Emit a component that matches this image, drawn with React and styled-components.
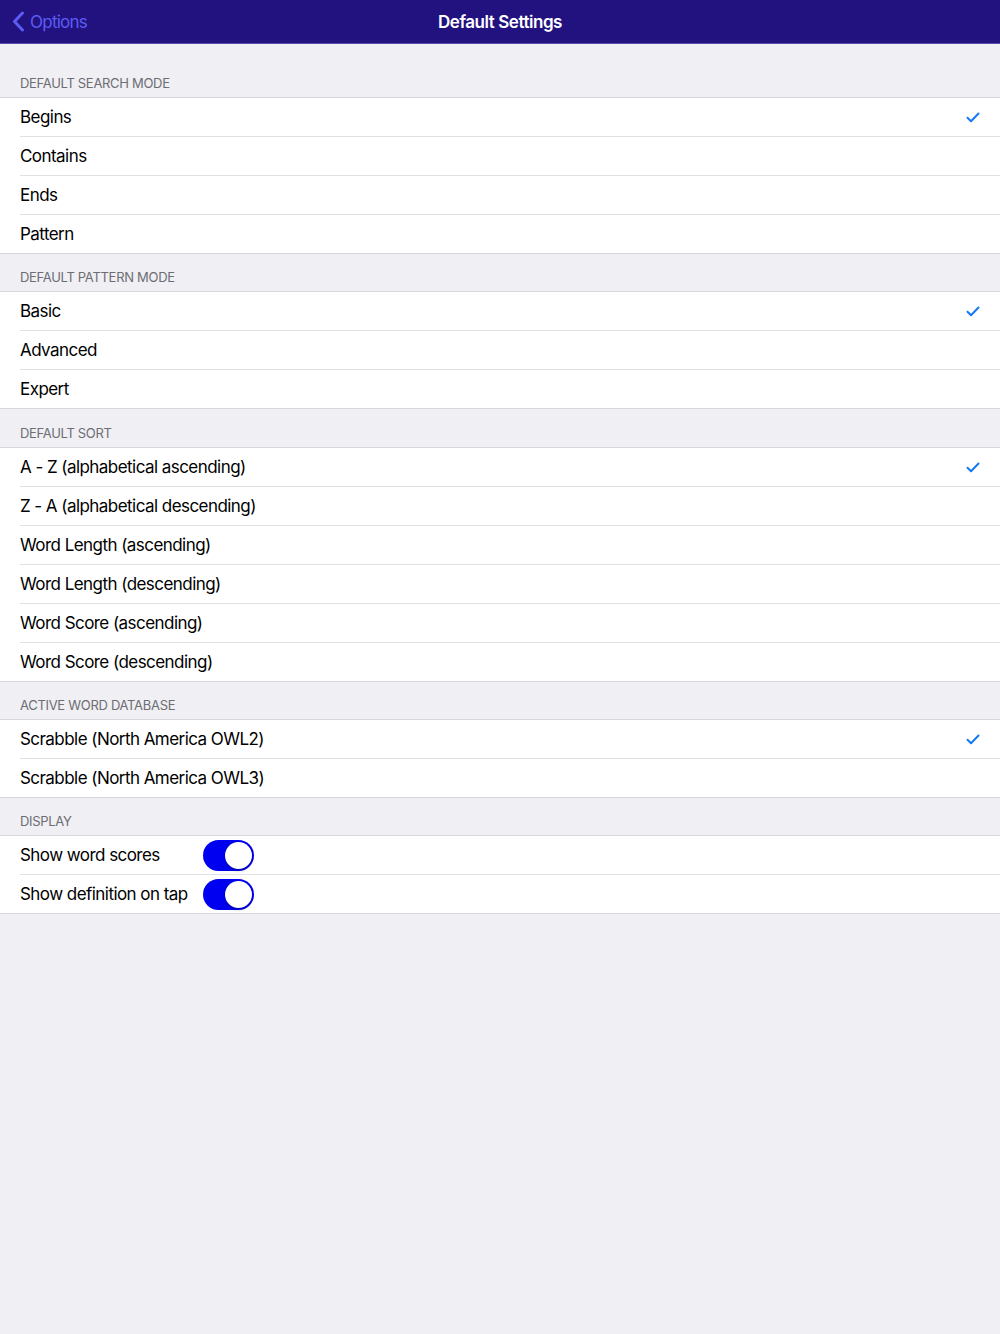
import React from "react";
import styled, { createGlobalStyle } from "styled-components";

const GlobalStyle = createGlobalStyle`
  html, body {
    margin: 0;
    padding: 0;
    background: #efeff4;
  }
  body {
    font-family: Inter, "Noto Sans", "Liberation Sans", sans-serif;
    -webkit-font-smoothing: antialiased;
  }
`;

const Page = styled.div`
  min-height: 1334px;
  background: #efeff4;
`;

const NavBar = styled.div`
  height: 44px;
  background: #21127f;
  border-bottom: 1px solid #5a4fa8;
  display: grid;
  grid-template-columns: 1fr auto 1fr;
  align-items: center;
  box-sizing: border-box;
`;

const BackButton = styled.div`
  display: flex;
  align-items: center;
  gap: 5px;
  padding-left: 12px;
  color: #5c5cf4;
  font-size: 17px;
  letter-spacing: -0.75px;
`;

const Title = styled.div`
  color: #fff;
  font-size: 17px;
  font-weight: 600;
  letter-spacing: -0.45px;
`;

const SectionHeader = styled.div`
  height: ${(p) => p.h}px;
  display: flex;
  align-items: flex-end;
  padding: 0 20px 6px;
  box-sizing: border-box;
  color: #6d6d72;
  font-size: 13px;
  letter-spacing: -0.3px;
`;

const Group = styled.div`
  background: #fff;
  border-top: 1px solid #d8d8dc;
  border-bottom: 1px solid #d8d8dc;
`;

const Row = styled.div`
  height: ${(p) => (p.first ? 38 : 39)}px;
  display: flex;
  align-items: center;
  margin-left: 20px;
  padding-right: 20px;
  border-top: ${(p) => (p.first ? "none" : "1px solid #e1e1e5")};
  box-sizing: border-box;
  font-size: 17px;
  color: #000;
  letter-spacing: -0.55px;
`;

const Label = styled.span`
  flex: ${(p) => (p.fixed ? "0 0 183px" : "1")};
`;

const Check = styled.svg`
  width: 14px;
  height: 11px;
`;

const Switch = styled.div`
  width: 51px;
  height: 31px;
  border-radius: 16px;
  background: #0000f0;
  position: relative;
  box-sizing: border-box;
`;

const Knob = styled.div`
  position: absolute;
  top: 2px;
  right: 2px;
  width: 27px;
  height: 27px;
  border-radius: 50%;
  background: #fff;
  box-shadow: 0 2px 3px rgba(0, 0, 0, 0.2), 0 0 0 0.5px rgba(0, 0, 0, 0.08);
`;

const sections = [
  {
    title: "DEFAULT SEARCH MODE",
    h: 53,
    items: ["Begins", "Contains", "Ends", "Pattern"],
  },
  {
    title: "DEFAULT PATTERN MODE",
    h: 37,
    items: ["Basic", "Advanced", "Expert"],
  },
  {
    title: "DEFAULT SORT",
    h: 38,
    items: [
      "A - Z (alphabetical ascending)",
      "Z - A (alphabetical descending)",
      "Word Length (ascending)",
      "Word Length (descending)",
      "Word Score (ascending)",
      "Word Score (descending)",
    ],
  },
  {
    title: "ACTIVE WORD DATABASE",
    h: 37,
    items: ["Scrabble (North America OWL2)", "Scrabble (North America OWL3)"],
  },
];

const toggles = ["Show word scores", "Show definition on tap"];

function Checkmark() {
  return (
    <Check viewBox="0 0 14 11">
      <path
        d="M1.5 5.8 L5 9.2 L12.5 1.5"
        fill="none"
        stroke="#1479f5"
        strokeWidth="2"
        strokeLinecap="round"
        strokeLinejoin="round"
      />
    </Check>
  );
}

export default function App() {
  return (
    <Page>
      <GlobalStyle />
      <NavBar>
        <BackButton>
          <svg width="13" height="21" viewBox="0 0 13 21">
            <path
              d="M10.5 2 L2.5 10.5 L10.5 19"
              fill="none"
              stroke="#5c5cf4"
              strokeWidth="3"
              strokeLinecap="round"
              strokeLinejoin="round"
            />
          </svg>
          Options
        </BackButton>
        <Title>Default Settings</Title>
        <div />
      </NavBar>

      {sections.map((s) => (
        <React.Fragment key={s.title}>
          <SectionHeader h={s.h}>{s.title}</SectionHeader>
          <Group>
            {s.items.map((item, i) => (
              <Row key={item} first={i === 0}>
                <Label>{item}</Label>
                {i === 0 && <Checkmark />}
              </Row>
            ))}
          </Group>
        </React.Fragment>
      ))}

      <SectionHeader h={37}>DISPLAY</SectionHeader>
      <Group>
        {toggles.map((t, i) => (
          <Row key={t} first={i === 0}>
            <Label fixed>{t}</Label>
            <Switch>
              <Knob />
            </Switch>
          </Row>
        ))}
      </Group>
    </Page>
  );
}
